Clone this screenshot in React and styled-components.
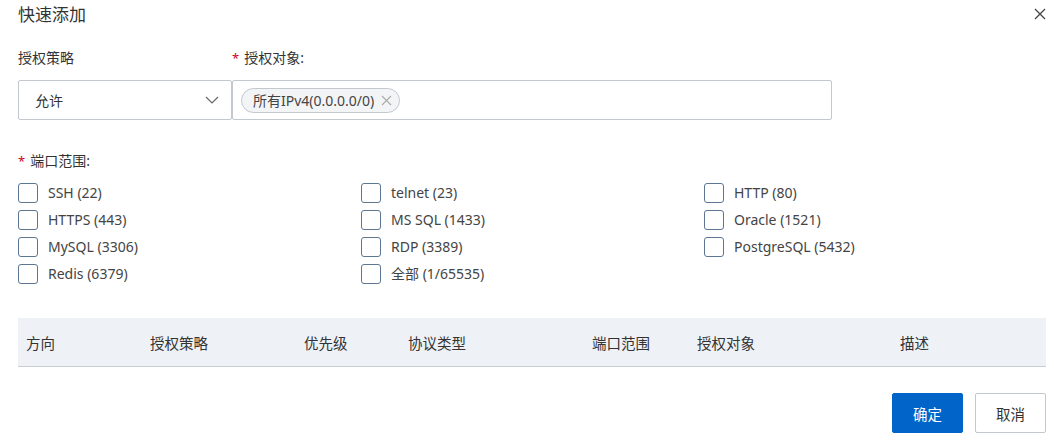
import React from 'react';
import styled, { createGlobalStyle } from 'styled-components';

const GlobalStyle = createGlobalStyle`
  html, body {
    margin: 0;
    padding: 0;
    background: #ffffff;
  }
  body {
    font-family: "Noto Sans", "Noto Sans CJK SC", sans-serif;
    color: #333333;
  }
  * { box-sizing: border-box; }
`

const Dialog = styled.div`
  width: 1054px;
  height: 448px;
  padding: 0 8px 0 18px;
  display: flex;
  flex-direction: column;
`

const Header = styled.div`
  height: 27px;
  display: flex;
  align-items: center;
  justify-content: space-between;
`

const Title = styled.span`
  font-size: 17px;
  color: #333;
`

const CloseButton = styled.button`
  width: 14px;
  height: 14px;
  padding: 0;
  margin-right: -1px;
  border: 0;
  background: transparent;
  display: flex;
  align-items: center;
  justify-content: center;
  cursor: pointer;
`

const FormRow = styled.div`
  display: flex;
  margin-top: 20px;
`

const Field = styled.div`
  display: flex;
  flex-direction: column;
  width: ${p => p.$width}px;
`

const Label = styled.div`
  height: 22px;
  font-size: 14px;
  line-height: 22px;
  color: #333;
  display: flex;
  align-items: center;
`

const Star = styled.span`
  color: #d0021b;
  margin-right: 5px;
  font-size: 13px;
`

const Select = styled.div`
  margin-top: 11px;
  height: 40px;
  border: 1px solid #c3c8cf;
  border-radius: 2px;
  display: flex;
  align-items: center;
  justify-content: space-between;
  padding: 0 12px 0 16px;
  font-size: 14px;
  color: #333;
`

const TagInput = styled.div`
  margin-top: 11px;
  height: 40px;
  border: 1px solid #c3c8cf;
  border-radius: 2px;
  display: flex;
  align-items: center;
  padding: 0 8px;
`

const Tag = styled.span`
  height: 25px;
  border: 1px solid #c3c8cf;
  border-radius: 13px;
  background: #f3f4f6;
  display: inline-flex;
  align-items: center;
  padding: 0 7px 0 11px;
  font-size: 14px;
  color: #444;
  gap: 7px;
`

const SectionLabel = styled(Label)`
  margin-top: 30px;
`

const CheckGrid = styled.div`
  display: grid;
  grid-template-columns: 343px 343px 343px;
  grid-auto-rows: 27px;
  margin-top: 11px;
`

const CheckItem = styled.label`
  display: flex;
  align-items: flex-start;
  font-size: 14px;
  color: #444;
  line-height: 20px;
`

const Box = styled.span`
  width: 20px;
  height: 20px;
  border: 1px solid #5d7693;
  border-radius: 3px;
  margin-right: 10px;
  flex: none;
`

const Table = styled.div`
  margin-top: 27px;
  height: 49px;
  background: #eef1f6;
  border-bottom: 1px solid #c8ccd3;
  display: grid;
  grid-template-columns: 124px 154px 104px 184px 105px 203px 1fr;
  align-items: center;
  padding-left: 8px;
  font-size: 14.5px;
  color: #333;
`

const Footer = styled.div`
  margin-top: 26px;
  display: flex;
  justify-content: flex-end;
  gap: 12px;
`

const Button = styled.button`
  width: 71px;
  height: 40px;
  border-radius: 2px;
  font-family: inherit;
  font-size: 14.5px;
  cursor: pointer;
  background: ${p => (p.$primary ? '#0064c8' : '#ffffff')};
  color: ${p => (p.$primary ? '#ffffff' : '#333')};
  border: 1px solid ${p => (p.$primary ? '#0064c8' : '#c3c8cf')};
`

const ports = [
  'SSH (22)', 'telnet (23)', 'HTTP (80)',
  'HTTPS (443)', 'MS SQL (1433)', 'Oracle (1521)',
  'MySQL (3306)', 'RDP (3389)', 'PostgreSQL (5432)',
  'Redis (6379)', '全部 (1/65535)',
];

const columns = ['方向', '授权策略', '优先级', '协议类型', '端口范围', '授权对象', '描述'];

function App() {
  return (
    <>
      <GlobalStyle />
      <Dialog>
        <Header>
          <Title>快速添加</Title>
          <CloseButton>
            <svg width="12" height="12" viewBox="0 0 12 12">
              <path d="M1 1L11 11M11 1L1 11" stroke="#444" strokeWidth="1.3" fill="none" />
            </svg>
          </CloseButton>
        </Header>

        <FormRow>
          <Field $width={214}>
            <Label>授权策略</Label>
            <Select>
              <span>允许</span>
              <svg width="14" height="8" viewBox="0 0 14 8">
                <path d="M1 1L7 7L13 1" stroke="#666" strokeWidth="1.2" fill="none" />
              </svg>
            </Select>
          </Field>
          <Field $width={600}>
            <Label><Star>*</Star>授权对象:</Label>
            <TagInput>
              <Tag>
                所有IPv4(0.0.0.0/0)
                <svg width="11" height="11" viewBox="0 0 11 11">
                  <path d="M1 1L10 10M10 1L1 10" stroke="#aaa" strokeWidth="1.1" fill="none" />
                </svg>
              </Tag>
            </TagInput>
          </Field>
        </FormRow>

        <SectionLabel><Star>*</Star>端口范围:</SectionLabel>
        <CheckGrid>
          {ports.map(p => (
            <CheckItem key={p}>
              <Box />
              {p}
            </CheckItem>
          ))}
        </CheckGrid>

        <Table>
          {columns.map(c => <span key={c}>{c}</span>)}
        </Table>

        <Footer>
          <Button $primary>确定</Button>
          <Button>取消</Button>
        </Footer>
      </Dialog>
    </>
  );
}

export default App;
